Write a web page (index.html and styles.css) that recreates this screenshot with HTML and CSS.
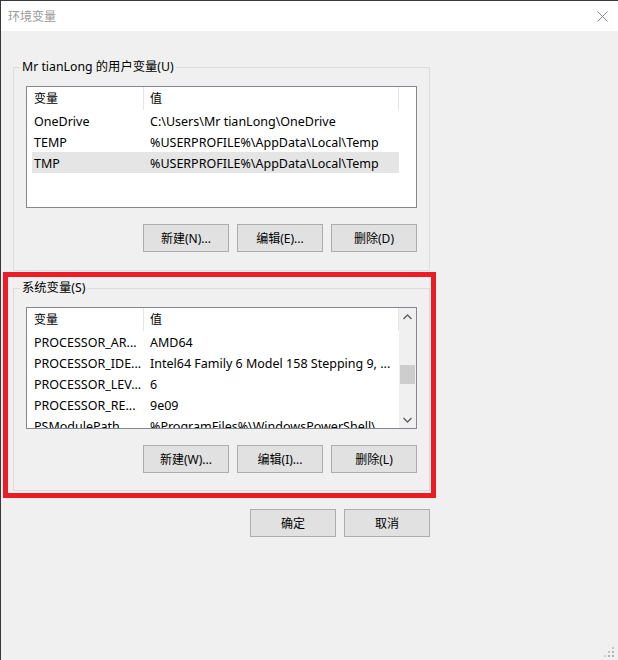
FILE: index.html
```html
<!DOCTYPE html>
<html lang="zh-CN">
<head>
<meta charset="utf-8">
<title>环境变量</title>
<link rel="stylesheet" href="styles.css">
</head>
<body>
<div class="window">
  <div class="titlebar">
    <span class="title">环境变量</span>
    <svg class="close" width="11" height="11" viewBox="0 0 11 11"><path d="M0.5 0.5L10.5 10.5M10.5 0.5L0.5 10.5" stroke="#8a8a8a" stroke-width="1" fill="none"/></svg>
  </div>
  <div class="content">
    <fieldset class="group">
      <legend>Mr tianLong 的用户变量(U)</legend>
      <div class="list">
        <div class="view">
          <div class="head"><div class="hc c1">变量</div><div class="hc c2">值</div></div>
          <div class="row"><span class="c1">OneDrive</span><span class="c2">C:\Users\Mr tianLong\OneDrive</span></div>
          <div class="row"><span class="c1">TEMP</span><span class="c2">%USERPROFILE%\AppData\Local\Temp</span></div>
          <div class="row selected"><span class="c1">TMP</span><span class="c2">%USERPROFILE%\AppData\Local\Temp</span></div>
        </div>
        <div class="noscroll"></div>
      </div>
      <div class="btns">
        <button class="btn">新建(N)...</button>
        <button class="btn">编辑(E)...</button>
        <button class="btn">删除(D)</button>
      </div>
    </fieldset>
    <fieldset class="group sys">
      <legend>系统变量(S)</legend>
      <div class="list">
        <div class="view">
          <div class="head"><div class="hc c1">变量</div><div class="hc c2">值</div></div>
          <div class="row"><span class="c1">PROCESSOR_AR...</span><span class="c2">AMD64</span></div>
          <div class="row"><span class="c1">PROCESSOR_IDE...</span><span class="c2">Intel64 Family 6 Model 158 Stepping 9, ...</span></div>
          <div class="row"><span class="c1">PROCESSOR_LEV...</span><span class="c2">6</span></div>
          <div class="row"><span class="c1">PROCESSOR_RE...</span><span class="c2">9e09</span></div>
          <div class="row"><span class="c1">PSModulePath</span><span class="c2">%ProgramFiles%\WindowsPowerShell\</span></div>
        </div>
        <div class="scrollbar">
          <div class="arrow"><svg width="9" height="6" viewBox="0 0 9 6"><path d="M0.5 5L4.5 1L8.5 5" stroke="#606060" stroke-width="1.4" fill="none"/></svg></div>
          <div class="track"><div class="thumb"></div></div>
          <div class="arrow"><svg width="9" height="6" viewBox="0 0 9 6"><path d="M0.5 1L4.5 5L8.5 1" stroke="#606060" stroke-width="1.4" fill="none"/></svg></div>
        </div>
      </div>
      <div class="btns">
        <button class="btn">新建(W)...</button>
        <button class="btn">编辑(I)...</button>
        <button class="btn">删除(L)</button>
      </div>
    </fieldset>
    <div class="btns dialog">
      <button class="btn">确定</button>
      <button class="btn">取消</button>
    </div>
  </div>
  <div class="highlight"></div>
  <svg class="grip" width="12" height="11" viewBox="0 0 12 11">
    <rect x="9" y="0" width="2" height="2" fill="#c4c4c4"/>
    <rect x="5" y="4" width="2" height="2" fill="#c4c4c4"/>
    <rect x="9" y="4" width="2" height="2" fill="#b4b4b4"/>
    <rect x="1" y="8" width="2" height="2" fill="#d0d0d0"/>
    <rect x="5" y="8" width="2" height="2" fill="#b4b4b4"/>
    <rect x="9" y="8" width="2" height="2" fill="#b4b4b4"/>
  </svg>
</div>
</body>
</html>
```
FILE: styles.css
```css
html, body {
  margin: 0;
  background: #f0f0f0;
}
.window {
  position: relative;
  width: 618px;
  height: 660px;
  box-sizing: border-box;
  border-top: 1px solid #3a3a3a;
  border-left: 1px solid #3a3a3a;
  background: #f0f0f0;
  font-family: "Noto Sans", "Noto Sans CJK SC", sans-serif;
  font-size: 12px;
  color: #000;
}
.titlebar {
  height: 30px;
  background: #fff;
  display: flex;
  align-items: center;
  justify-content: space-between;
}
.title {
  margin-left: 7px;
  color: #9a9a9a;
  font-size: 12px;
}
.close {
  margin-right: 10px;
  margin-top: 1px;
}
.content {
  padding: 27px 0 0 12px;
}
.group {
  width: 417px;
  box-sizing: border-box;
  margin: 0;
  border: 1px solid #dcdcdc;
  padding: 10px 12px 18px 12px;
}
.group legend {
  padding: 0 2px;
  margin-left: -6px;
  line-height: 18px;
  height: 18px;
  font-size: 12.3px;
}
.group.sys {
  margin-top: 8px;
  padding-bottom: 17px;
}
.list {
  height: 122px;
  box-sizing: border-box;
  border: 1px solid #828790;
  background: #fff;
  display: flex;
  overflow: hidden;
}
.view {
  width: 372px;
  flex: none;
}
.noscroll {
  flex: 1;
}
.head {
  display: flex;
  height: 23px;
}
.hc {
  line-height: 24px;
  box-sizing: border-box;
  border-right: 1px solid #e5e5e5;
}
.hc.c1 {
  width: 117px;
  padding-left: 7px;
}
.hc.c2 {
  width: 255px;
  padding-left: 6px;
}
.row {
  display: flex;
  height: 21px;
  line-height: 23px;
  margin-left: 5px;
  white-space: nowrap;
  font-size: 12.5px;
}
.row .c1 {
  width: 112px;
  padding-left: 2px;
  box-sizing: border-box;
  overflow: hidden;
}
.row .c2 {
  padding-left: 6px;
  overflow: hidden;
  flex: 1;
}
.row.selected {
  background: #e5e5e5;
}
.scrollbar {
  width: 17px;
  flex: none;
  background: #f0f0f0;
  display: flex;
  flex-direction: column;
}
.arrow {
  height: 17px;
  display: flex;
  align-items: center;
  justify-content: center;
}
.track {
  flex: 1;
  padding-top: 40px;
}
.thumb {
  height: 19px;
  margin: 0 1px;
  background: #cdcdcd;
}
.btns {
  display: flex;
  justify-content: flex-end;
  gap: 8px;
  margin-top: 16px;
}
.btns.dialog {
  width: 417px;
  margin-top: 18px;
}
.btn {
  width: 86px;
  height: 28px;
  box-sizing: border-box;
  border: 1px solid #adadad;
  background: #e1e1e1;
  font-family: inherit;
  font-size: 12px;
  color: #000;
  padding: 0;
  margin: 0;
  border-radius: 0;
}
.highlight {
  position: absolute;
  left: 2px;
  top: 271px;
  width: 433px;
  height: 226px;
  box-sizing: border-box;
  border: 5px solid #ed1c24;
  pointer-events: none;
}
.grip {
  position: absolute;
  right: 3px;
  bottom: 2px;
}
```
